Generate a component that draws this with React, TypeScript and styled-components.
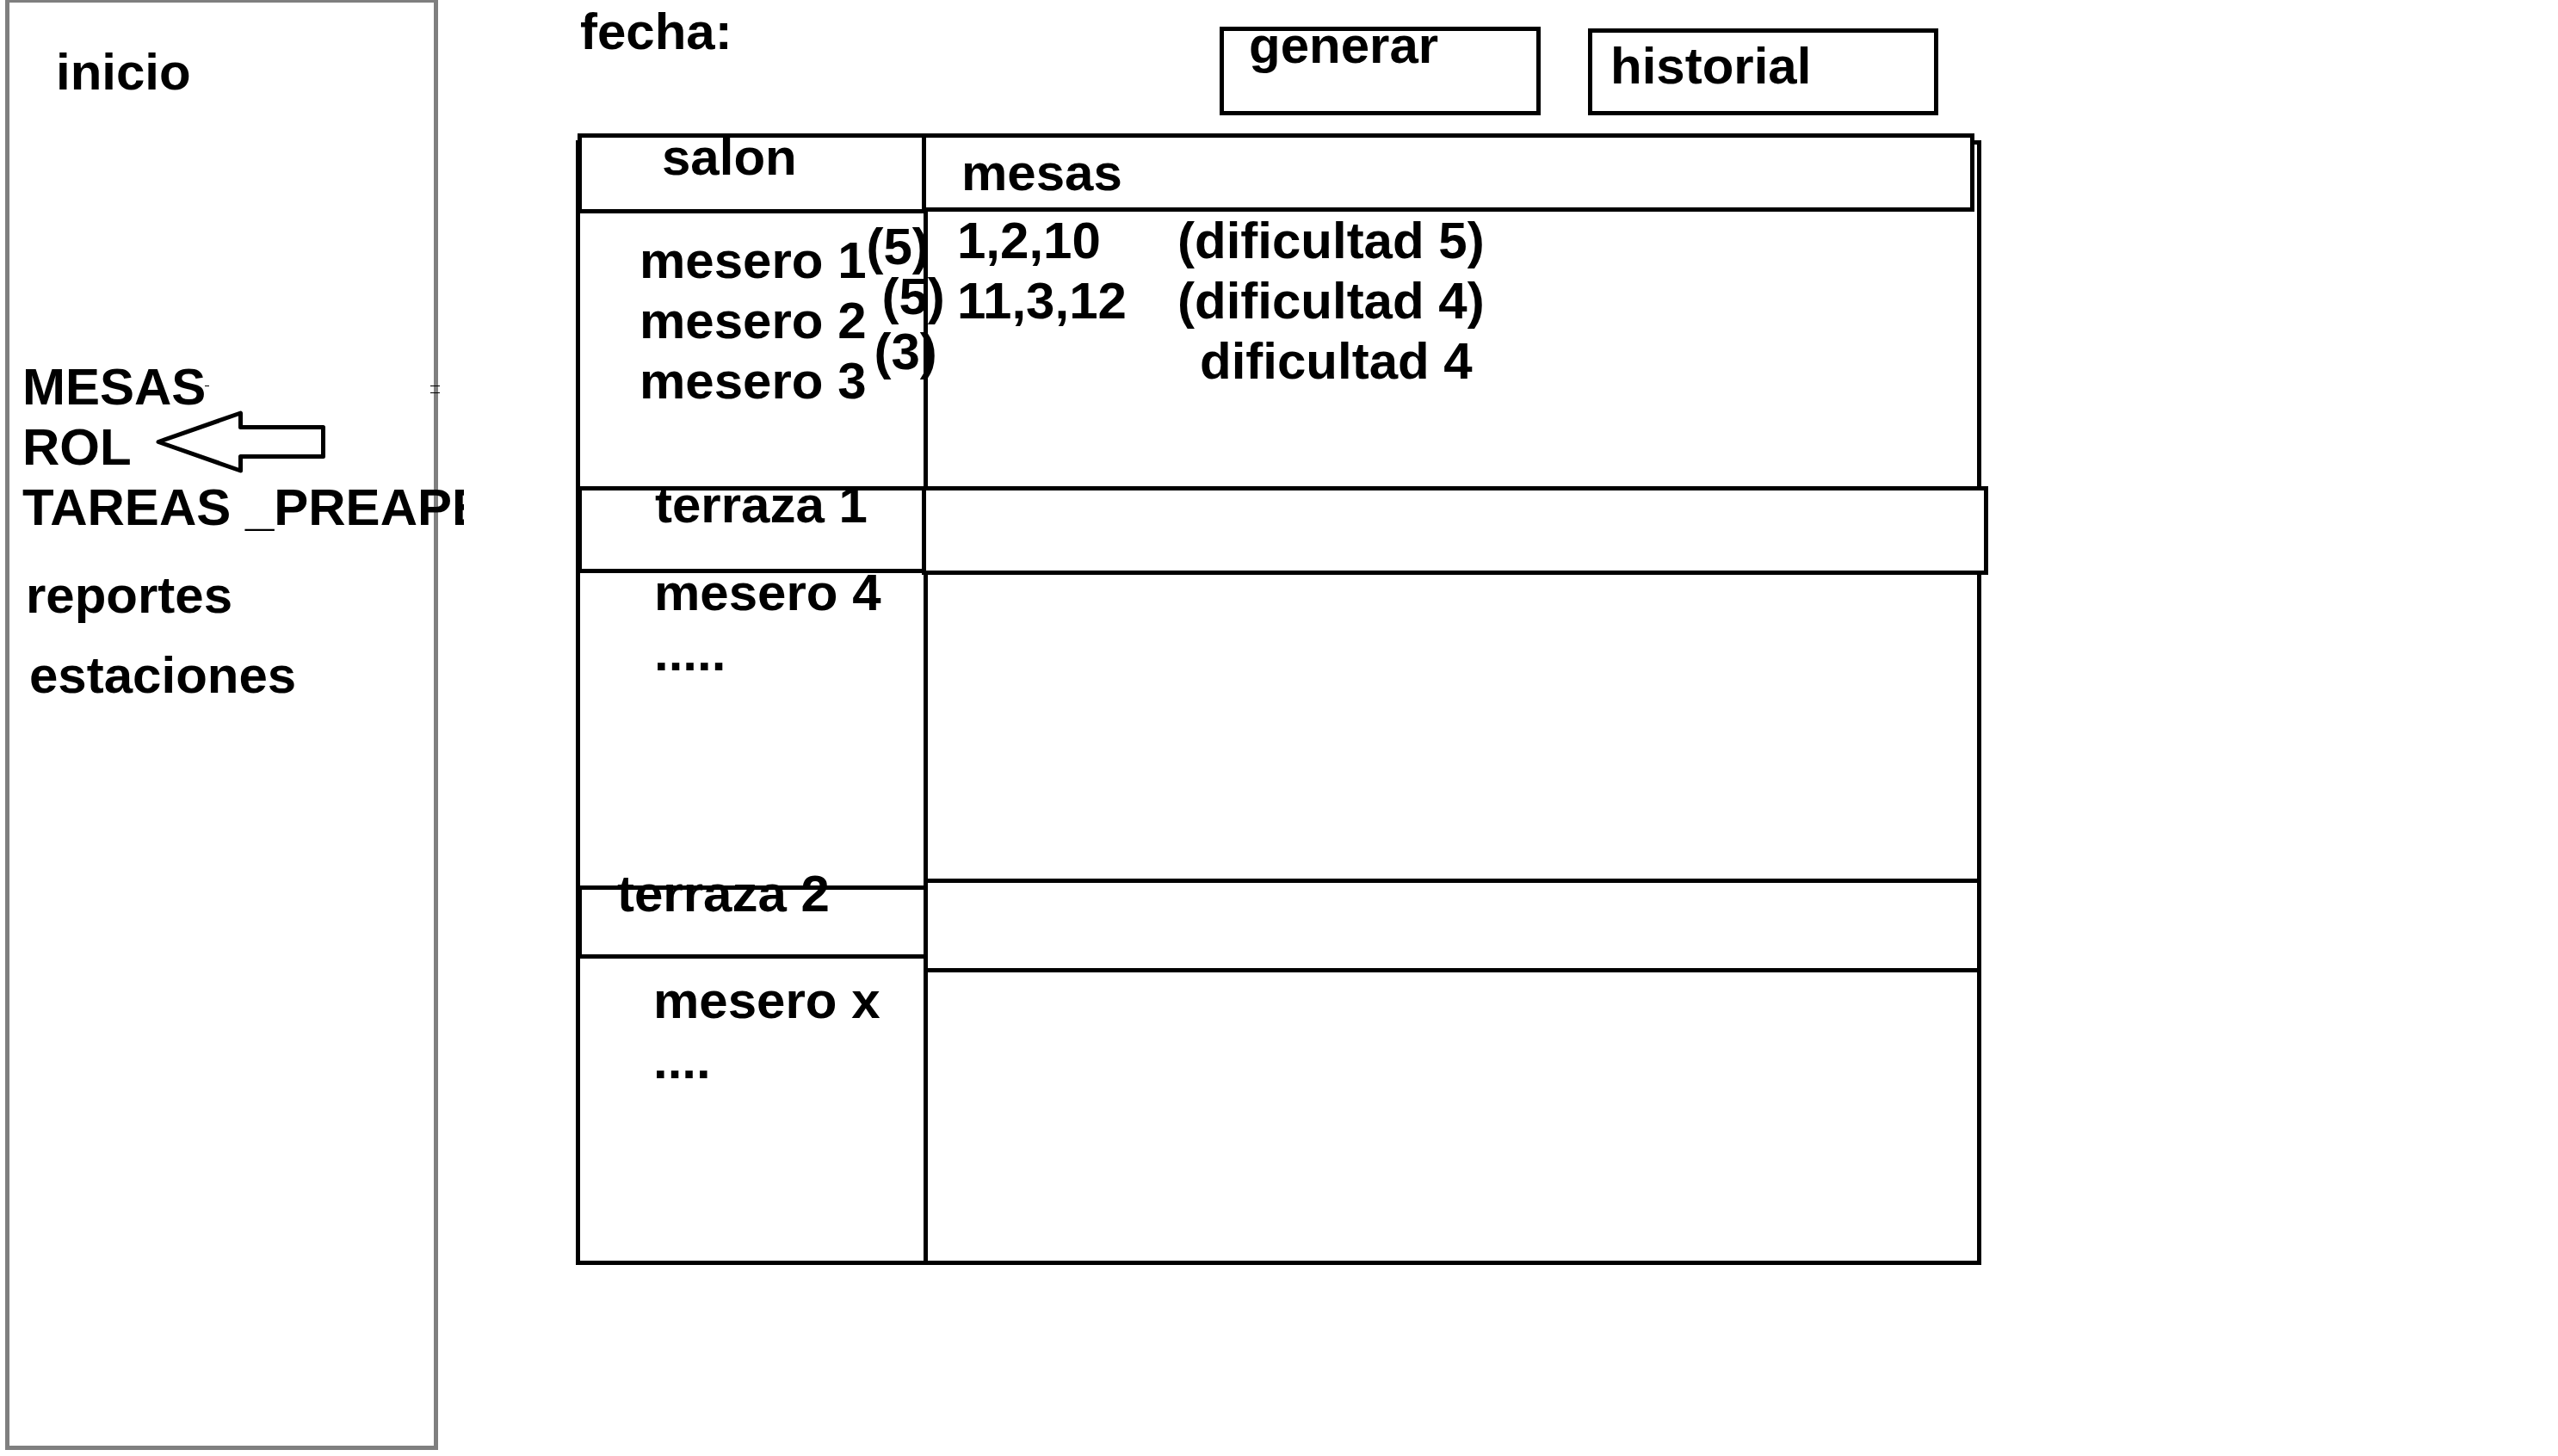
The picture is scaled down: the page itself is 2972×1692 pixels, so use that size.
import React from 'react';
import styled, { createGlobalStyle } from 'styled-components';

const GlobalStyle = createGlobalStyle`
  *, *::before, *::after { box-sizing: border-box; }
  body {
    margin: 0;
    background: #fff;
    color: #000;
    font: bold 60px/70px "Liberation Sans", Arial, sans-serif;
    white-space: nowrap;
  }
`;

const Page = styled.div`
  display: flex;
  align-items: flex-start;
`;

/* ---- side navigation ---- */

const Sidebar = styled.aside`
  position: relative;
  flex: 0 0 503px;
  min-width: 0;
  min-height: calc(100vh - 7px);
  margin-left: 6px;
  padding-top: 46px;
  border: 5px solid #7f7f7f;
  border-top-width: 3px;
`;

const Nav = styled.nav`
  display: flex;
  flex-direction: column;
  margin-right: -35px;
`;

const NavLink = styled.a<{ $indent: number; $above?: number }>`
  display: flex;
  margin-top: ${(p) => p.$above ?? 0}px;
  padding-left: ${(p) => p.$indent}px;
  overflow-x: clip;
  color: inherit;
  text-decoration: none;
`;

const Arrow = styled.svg`
  flex: none;
  margin: -8px 0 5px 28px;
`;

const StrayMarks = styled.svg`
  position: absolute;
  top: 445px;
  left: 227px;
`;

/* ---- main area ---- */

const Main = styled.main`
  flex: 1;
  min-width: 0;
  padding: 0 670px 0 160px;
`;

const Toolbar = styled.header`
  display: flex;
  justify-content: space-between;
  align-items: flex-start;
  padding: 2px 50px 0 5px;
`;

const Actions = styled.div`
  display: flex;
  align-items: flex-end;
  gap: 55px;
  padding-top: 29px;
`;

const ActionButton = styled.button<{ $width: number; $height: number; $indent: number }>`
  display: flex;
  align-items: flex-start;
  width: ${(p) => p.$width}px;
  height: ${(p) => p.$height}px;
  padding: 0 0 0 ${(p) => p.$indent}px;
  border: 5px solid #000;
  border-radius: 0;
  background: none;
  color: inherit;
  font: inherit;
`;

const Label = styled.span<{ $shift: number }>`
  margin-top: ${(p) => p.$shift}px;
`;

const Frame = styled.section`
  margin-top: 29px;
  border: 5px solid #000;
`;

const Roster = styled.table`
  width: 100%;
  table-layout: fixed;
  border-collapse: separate;
  border-spacing: 0;

  th, td {
    padding: 0;
    text-align: left;
    vertical-align: top;
    font-weight: bold;
  }
`;

const StaffColumn = styled.col`
  width: 399px;
`;

const BandRow = styled.tr<{ $height: number }>`
  height: ${(p) => p.$height}px;
`;

/* A heading box whose frame may reach past the cell that holds it. */
const Band = styled.div<{ $height: number; $margin: string; $indent?: number }>`
  display: flex;
  align-items: flex-start;
  height: ${(p) => p.$height}px;
  margin: ${(p) => p.$margin};
  padding-left: ${(p) => p.$indent ?? 0}px;
  border: 5px solid #000;
  background: #fff;
`;

const BodyRow = styled.tr<{ $height: number }>`
  height: ${(p) => p.$height}px;

  td + td { border-left: 5px solid #000; }
`;

const Staff = styled.div<{ $shift: number; $indent: number }>`
  margin-top: ${(p) => p.$shift}px;
  padding-left: ${(p) => p.$indent}px;
`;

const StaffLine = styled.div`
  display: flex;
  align-items: flex-start;
  height: 70px;
`;

const Count = styled.span<{ $rise: number; $gap: number }>`
  margin: -${(p) => p.$rise}px 0 0 ${(p) => p.$gap}px;
`;

const Assignments = styled.div`
  display: grid;
  grid-template-columns: 256px 1fr;
  margin-top: -1px;
  padding-left: 34px;
`;

const Difficulty = styled.span<{ $indent?: number }>`
  grid-column: 2;
  padding-left: ${(p) => p.$indent ?? 0}px;
`;

export default function App() {
  return (
    <>
      <GlobalStyle />
      <Page>
        <Sidebar>
          <Nav>
            <NavLink href="#inicio" $indent={54}>inicio</NavLink>
            <NavLink href="#mesas" $indent={15} $above={296}>MESAS</NavLink>
            <NavLink href="#rol" $indent={15} aria-current="page">
              ROL
              <Arrow width="197" height="73" viewBox="0 0 197 73" aria-hidden="true">
                <path
                  d="M3 36.5 98.5 3V19.5H194.5V53.5H98.5V70Z"
                  fill="#fff"
                  stroke="#000"
                  strokeWidth="5"
                  strokeLinejoin="round"
                />
              </Arrow>
            </NavLink>
            <NavLink href="#tareas" $indent={15}>TAREAS _PREAPE</NavLink>
            <NavLink href="#reportes" $indent={19} $above={32}>reportes</NavLink>
            <NavLink href="#estaciones" $indent={23} $above={23}>estaciones</NavLink>
          </Nav>
          <StrayMarks width="274" height="9" viewBox="0 0 274 9" aria-hidden="true">
            <path d="M0 .5H5M262 .5H273M262 8.5H273" stroke="#000" />
          </StrayMarks>
        </Sidebar>

        <Main>
          <Toolbar>
            <span>fecha:</span>
            <Actions>
              <ActionButton type="button" $width={373} $height={103} $indent={29}>
                <Label $shift={-18}>generar</Label>
              </ActionButton>
              <ActionButton type="button" $width={407} $height={101} $indent={21}>
                <Label $shift={4}>historial</Label>
              </ActionButton>
            </Actions>
          </Toolbar>

          <Frame>
            <Roster>
              <colgroup>
                <StaffColumn />
                <col />
              </colgroup>
              <thead>
                <BandRow $height={78}>
                  <th scope="col">
                    <Band $height={93} $margin="-13px -3px -2px -3px" $indent={93}>
                      <Label $shift={-12}>salon</Label>
                    </Band>
                  </th>
                  <th scope="col">
                    <Band $height={91} $margin="-13px 3px 0 -2px" $indent={41}>
                      <Label $shift={6}>mesas</Label>
                    </Band>
                  </th>
                </BandRow>
              </thead>
              <tbody>
                <BodyRow $height={319}>
                  <td>
                    <Staff $shift={22} $indent={69}>
                      <StaffLine>mesero 1<Count $rise={16} $gap={0}>(5)</Count></StaffLine>
                      <StaffLine>mesero 2<Count $rise={28} $gap={18}>(5)</Count></StaffLine>
                      <StaffLine>mesero 3<Count $rise={34} $gap={9}>(3)</Count></StaffLine>
                    </Staff>
                  </td>
                  <td>
                    <Assignments>
                      <span>1,2,10</span>
                      <Difficulty>(dificultad 5)</Difficulty>
                      <span>11,3,12</span>
                      <Difficulty>(dificultad 4)</Difficulty>
                      <Difficulty $indent={26}>dificultad 4</Difficulty>
                    </Assignments>
                  </td>
                </BodyRow>
              </tbody>
              <tbody>
                <BandRow $height={103}>
                  <th scope="rowgroup">
                    <Band $height={101} $margin="0 -3px" $indent={85}>
                      <Label $shift={-18}>terraza 1</Label>
                    </Band>
                  </th>
                  <td>
                    <Band $height={103} $margin="0 -13px 0 -2px" />
                  </td>
                </BandRow>
                <BodyRow $height={353}>
                  <td>
                    <Staff $shift={-14} $indent={86}>
                      <StaffLine>mesero 4</StaffLine>
                      <StaffLine>.....</StaffLine>
                    </Staff>
                  </td>
                  <td />
                </BodyRow>
              </tbody>
              <tbody>
                <BandRow $height={109}>
                  <th scope="rowgroup">
                    <Band $height={85} $margin="8px -5px 0 -3px" $indent={41}>
                      <Label $shift={-30}>terraza 2</Label>
                    </Band>
                  </th>
                  <td>
                    <Band $height={109} $margin="0 -5px 0 0" />
                  </td>
                </BandRow>
                <BodyRow $height={335}>
                  <td>
                    <Staff $shift={-2} $indent={85}>
                      <StaffLine>mesero x</StaffLine>
                      <StaffLine>....</StaffLine>
                    </Staff>
                  </td>
                  <td />
                </BodyRow>
              </tbody>
            </Roster>
          </Frame>
        </Main>
      </Page>
    </>
  );
}
